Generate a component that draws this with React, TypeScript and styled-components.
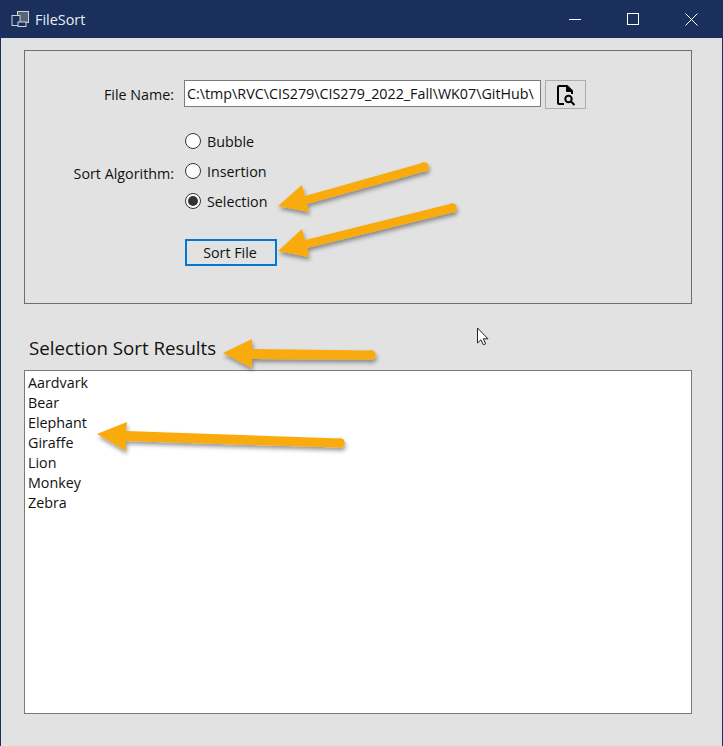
import React from "react";
import styled, { createGlobalStyle } from "styled-components";

const Global = createGlobalStyle`
  html, body { margin: 0; padding: 0; background: #e2e2e2; }
  #root { width: 723px; height: 746px; overflow: hidden; }
`;

const Window = styled.div`
  position: relative;
  box-sizing: border-box;
  width: 723px;
  height: 746px;
  display: flex;
  flex-direction: column;
  background: #e2e2e2;
  border-left: 1px solid #1a2f5c;
  border-right: 1px solid #1a2f5c;
  font-family: "Open Sans", "Noto Sans", sans-serif;
  font-size: 14.3px;
  color: #111;
`;

const TitleBar = styled.header`
  flex: 0 0 38px;
  display: flex;
  align-items: center;
  background: #1a2f5c;
  color: #e8edf5;
  padding: 0 1px 0 10px;
`;

const AppTitle = styled.span`
  flex: 1;
  margin-left: 6px;
  font-size: 14.4px;
`;

const CaptionButton = styled.button`
  width: 58.5px;
  height: 38px;
  padding: 0;
  border: 0;
  background: transparent;
  display: flex;
  align-items: center;
  justify-content: center;
`;

const Content = styled.main`
  flex: 1;
  display: flex;
  flex-direction: column;
  padding: 12px 30px 32px 23px;
`;

const Panel = styled.section`
  box-sizing: border-box;
  height: 254px;
  border: 1px solid #6e6e6e;
  padding: 29px 0 0 0;
  display: grid;
  grid-template-columns: 149px 1fr;
  grid-template-rows: 29px 111px 1fr;
  column-gap: 10px;
`;

const FieldLabel = styled.label<{ $nudge?: number }>`
  justify-self: end;
  align-self: center;
  white-space: nowrap;
  padding-top: ${(p) => p.$nudge ?? 0}px;
`;

const FileRow = styled.div`
  display: flex;
  align-items: flex-start;
  gap: 4px;
`;

const PathInput = styled.div`
  box-sizing: border-box;
  width: 357px;
  height: 27px;
  border: 1px solid #7a7a7a;
  background: #fff;
  line-height: 25px;
  padding-left: 2px;
  white-space: nowrap;
  overflow: hidden;
`;

const BrowseButton = styled.button`
  box-sizing: border-box;
  width: 41px;
  height: 29px;
  padding: 0;
  border: 1px solid #adadad;
  background: #e2e2e2;
  display: flex;
  align-items: center;
  justify-content: center;
`;

const RadioGroup = styled.div`
  display: flex;
  flex-direction: column;
  padding-top: 17px;
`;

const RadioRow = styled.div`
  flex: 0 0 30px;
  display: flex;
  align-items: center;
  gap: 6px;
  padding-left: 1px;
`;

const RadioDot = styled.span<{ $on?: boolean }>`
  box-sizing: border-box;
  width: 16px;
  height: 16px;
  border-radius: 50%;
  border: 1px solid #333;
  background: #fff;
  display: flex;
  align-items: center;
  justify-content: center;
  &::after {
    content: "";
    display: ${(p) => (p.$on ? "block" : "none")};
    width: 10px;
    height: 10px;
    border-radius: 50%;
    background: #333;
  }
`;

const SortCell = styled.div`
  grid-column: 2;
  padding: 19px 0 0 1px;
`;

const SortButton = styled.button`
  box-sizing: border-box;
  width: 92px;
  height: 27px;
  padding: 0 2px 0 0;
  border: 2px solid #0078d7;
  background: #e2e2e2;
  font: inherit;
  color: inherit;
`;

const ResultsTitle = styled.h2`
  margin: 30px 0 0 0;
  padding-left: 5px;
  height: 36px;
  line-height: 27px;
  font-size: 18.7px;
  font-weight: 400;
`;

const ResultsList = styled.ul`
  box-sizing: border-box;
  flex: 1;
  margin: 0;
  padding: 2px 0 0 3px;
  list-style: none;
  background: #fff;
  border: 1px solid #7a7a7a;
`;

const ResultItem = styled.li`
  height: 20px;
  line-height: 20px;
`;

const Overlay = styled.svg`
  position: absolute;
  left: -1px;
  top: 0;
  width: 723px;
  height: 746px;
  pointer-events: none;
`;

const Cursor = styled.svg`
  position: absolute;
  left: 475px;
  top: 327px;
  width: 14px;
  height: 20px;
`;

const arrows = [
  { tip: "278,206", top: "302,185", bottom: "309,212", tail: [424, 167], a: [305, 196], b: [307, 204] },
  { tip: "278,251", top: "302,229", bottom: "309,257", tail: [452, 208], a: [305, 240], b: [307, 248] },
  { tip: "223,353", top: "252,339", bottom: "252,368", tail: [371, 355], a: [252, 349], b: [252, 359] },
  { tip: "97,434", top: "127,422", bottom: "126,451", tail: [340, 443], a: [126, 431], b: [126, 441] },
];

const items = ["Aardvark", "Bear", "Elephant", "Giraffe", "Lion", "Monkey", "Zebra"];

export default function App() {
  return (
    <Window>
      <Global />
      <TitleBar>
        <svg width="18" height="18" viewBox="0 0 18 18">
          <rect x="6.5" y="1.5" width="11" height="11" fill="#5a6478" stroke="#cfd3da" />
          <rect x="1" y="5.5" width="8" height="10" fill="#1a2f5c" stroke="#cfd3da" />
          <rect x="7" y="12" width="8" height="4.5" fill="#1a2f5c" stroke="#cfd3da" />
        </svg>
        <AppTitle>FileSort</AppTitle>
        <CaptionButton aria-label="minimize">
          <svg width="12" height="12" viewBox="0 0 12 12"><path d="M0 6.5h12" stroke="#fff" /></svg>
        </CaptionButton>
        <CaptionButton aria-label="maximize">
          <svg width="12" height="12" viewBox="0 0 12 12"><rect x=".5" y=".5" width="11" height="11" fill="none" stroke="#fff" /></svg>
        </CaptionButton>
        <CaptionButton aria-label="close">
          <svg width="13" height="13" viewBox="0 0 13 13"><path d="M.5.5l12 12M12.5.5l-12 12" stroke="#fff" /></svg>
        </CaptionButton>
      </TitleBar>
      <Content>
        <Panel>
          <FieldLabel>File Name:</FieldLabel>
          <FileRow>
            <PathInput>C:\tmp\RVC\CIS279\CIS279_2022_Fall\WK07\GitHub\</PathInput>
            <BrowseButton aria-label="browse">
              <svg width="22" height="22" viewBox="0 0 22 22" fill="none" stroke="#000" strokeWidth="2">
                <path d="M9 20H4a1 1 0 0 1-1-1V3a1 1 0 0 1 1-1h8l5 5v3" strokeLinejoin="round" />
                <path d="M11.5 2v5.5H17" fill="#000" strokeWidth="1" />
                <circle cx="13.5" cy="15" r="3.2" />
                <path d="M16 17.5l3.5 3.5" />
              </svg>
            </BrowseButton>
          </FileRow>
          <FieldLabel $nudge={18}>Sort Algorithm:</FieldLabel>
          <RadioGroup>
            <RadioRow><RadioDot />Bubble</RadioRow>
            <RadioRow><RadioDot />Insertion</RadioRow>
            <RadioRow><RadioDot $on />Selection</RadioRow>
          </RadioGroup>
          <SortCell>
            <SortButton>Sort File</SortButton>
          </SortCell>
        </Panel>
        <ResultsTitle>Selection Sort Results</ResultsTitle>
        <ResultsList>
          {items.map((t) => (
            <ResultItem key={t}>{t}</ResultItem>
          ))}
        </ResultsList>
      </Content>
      <Overlay viewBox="0 0 723 746">
        <defs>
          <filter id="arrowShadow" x="-20%" y="-40%" width="140%" height="200%">
            <feDropShadow dx="1" dy="3" stdDeviation="2" floodColor="#000" floodOpacity="0.4" />
          </filter>
        </defs>
        {arrows.map((r) => (
          <g key={r.tip} filter="url(#arrowShadow)" fill="#f9aa0c">
            <polygon points={`${r.tip} ${r.top} ${r.a[0]},${r.a[1]} ${r.tail[0]},${r.tail[1] - 4.5} ${r.tail[0]},${r.tail[1] + 4.5} ${r.b[0]},${r.b[1]} ${r.bottom}`} />
            <circle cx={r.tail[0]} cy={r.tail[1]} r="4.8" />
          </g>
        ))}
      </Overlay>
      <Cursor viewBox="0 0 14 20">
        <path d="M1.5 1v15l3.5-3.2 2.3 5 2.3-1-2.2-5h4.6z" fill="#fff" stroke="#222" strokeWidth="1" />
      </Cursor>
    </Window>
  );
}
